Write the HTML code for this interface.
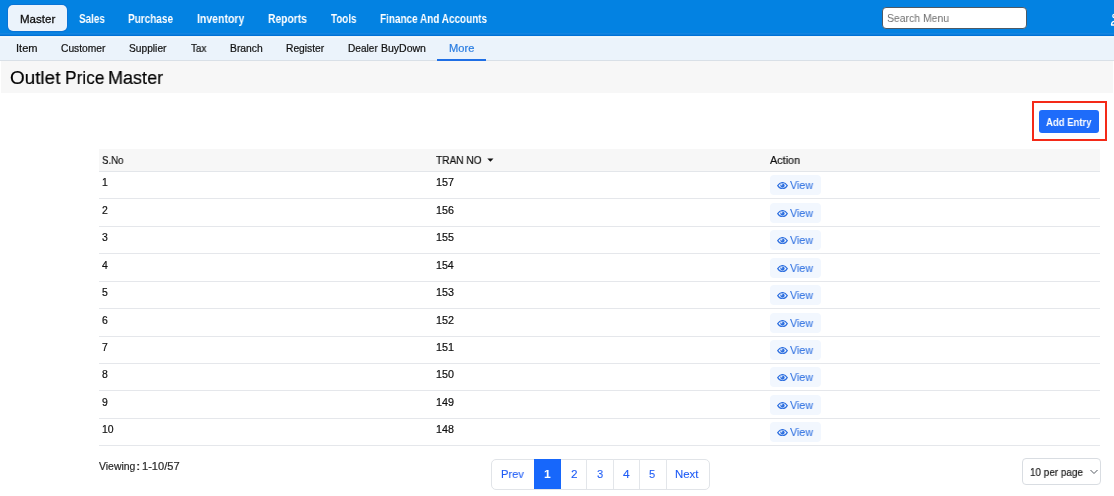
<!DOCTYPE html>
<html><head><meta charset="utf-8">
<style>
html,body{margin:0;padding:0;width:1114px;height:496px;overflow:hidden;background:#fff;position:relative;font-family:"Liberation Sans",sans-serif;}
.b{position:absolute;box-sizing:border-box;}
.t{position:absolute;white-space:nowrap;line-height:20px;height:20px;transform-origin:0 0;will-change:transform;font-family:"Liberation Sans",sans-serif;}
</style></head><body>
<!-- header -->
<div class="b" style="left:0;top:0;width:1114px;height:36px;background:#0382e2"></div>
<div class="b" style="left:0;top:33px;width:1114px;height:1px;background:#1484e0"></div><div class="b" style="left:0;top:34px;width:1114px;height:1px;background:#0a7fde"></div><div class="b" style="left:0;top:35px;width:1114px;height:1px;background:#0071d6"></div>
<div class="b" style="left:7px;top:4px;width:61px;height:28px;border-radius:6px;background:#0a74d6"></div>
<div class="b" style="left:8px;top:5px;width:59px;height:26px;border-radius:5px;background:#ebf3fb"></div>
<div class="b" style="left:882px;top:7px;width:145px;height:22px;border-radius:4px;background:#fff;border:1px solid #4d5a66"></div>
<svg class="b" style="left:1100px;top:5px" width="20" height="24" viewBox="0 0 20 24"><circle cx="14.4" cy="10.9" r="1.6" fill="none" stroke="#fff" stroke-width="1.3"/><path d="M11.5 20 C11.5 17.6 13.2 16.2 15.2 16.2 S19 17.6 19 20 Z" fill="none" stroke="#fff" stroke-width="1.3" stroke-linejoin="round"/></svg>
<!-- subnav -->
<div class="b" style="left:0;top:36px;width:1114px;height:25px;background:#ebf3fb"></div>
<div class="b" style="left:0;top:36px;width:1114px;height:1px;background:#edf5fb"></div><div class="b" style="left:0;top:37px;width:1114px;height:1px;background:#f1f8fc"></div>
<div class="b" style="left:0;top:60px;width:1114px;height:1px;background:#d9e0e7"></div>
<div class="b" style="left:437px;top:59px;width:49px;height:2px;background:#1f6fe5"></div>
<!-- title bar -->
<div class="b" style="left:1px;top:61px;width:1112px;height:32px;background:#f7f7f7"></div>
<!-- add entry -->
<div class="b" style="left:1032px;top:101px;width:75px;height:40px;border:2px solid #f42a18"></div>
<div class="b" style="left:1039px;top:110px;width:60px;height:23px;border-radius:3px;background:#1e6cfa"></div>
<!-- table -->
<div class="b" style="left:99px;top:149px;width:1001px;height:22px;background:#f7f7f7"></div>
<div class="b" style="left:99px;top:171px;width:1001px;height:1px;background:#e3e6ea"></div>
<div class="b" style="left:99px;top:198px;width:1001px;height:1px;background:#e5e7eb"></div>
<div class="b" style="left:770px;top:175px;width:50.5px;height:20px;border-radius:4px;background:#f2f7fe"></div>
<svg class="b" style="left:777px;top:182px" width="11" height="7.3" viewBox="0 0 11 7.3"><path d="M0.7 3.65 C2.3 1.2 3.9 0.55 5.5 0.55 S8.7 1.2 10.3 3.65 C8.7 6.1 7.1 6.75 5.5 6.75 S2.3 6.1 0.7 3.65 Z" fill="none" stroke="#2d6fe0" stroke-width="1.15"/><circle cx="5.5" cy="3.6" r="2.15" fill="#2d6fe0"/><circle cx="4.7" cy="2.8" r="0.75" fill="#f2f7fe"/></svg>
<div class="b" style="left:99px;top:226px;width:1001px;height:1px;background:#e5e7eb"></div>
<div class="b" style="left:770px;top:203px;width:50.5px;height:20px;border-radius:4px;background:#f2f7fe"></div>
<svg class="b" style="left:777px;top:210px" width="11" height="7.3" viewBox="0 0 11 7.3"><path d="M0.7 3.65 C2.3 1.2 3.9 0.55 5.5 0.55 S8.7 1.2 10.3 3.65 C8.7 6.1 7.1 6.75 5.5 6.75 S2.3 6.1 0.7 3.65 Z" fill="none" stroke="#2d6fe0" stroke-width="1.15"/><circle cx="5.5" cy="3.6" r="2.15" fill="#2d6fe0"/><circle cx="4.7" cy="2.8" r="0.75" fill="#f2f7fe"/></svg>
<div class="b" style="left:99px;top:253px;width:1001px;height:1px;background:#e5e7eb"></div>
<div class="b" style="left:770px;top:230px;width:50.5px;height:20px;border-radius:4px;background:#f2f7fe"></div>
<svg class="b" style="left:777px;top:237px" width="11" height="7.3" viewBox="0 0 11 7.3"><path d="M0.7 3.65 C2.3 1.2 3.9 0.55 5.5 0.55 S8.7 1.2 10.3 3.65 C8.7 6.1 7.1 6.75 5.5 6.75 S2.3 6.1 0.7 3.65 Z" fill="none" stroke="#2d6fe0" stroke-width="1.15"/><circle cx="5.5" cy="3.6" r="2.15" fill="#2d6fe0"/><circle cx="4.7" cy="2.8" r="0.75" fill="#f2f7fe"/></svg>
<div class="b" style="left:99px;top:281px;width:1001px;height:1px;background:#e5e7eb"></div>
<div class="b" style="left:770px;top:258px;width:50.5px;height:20px;border-radius:4px;background:#f2f7fe"></div>
<svg class="b" style="left:777px;top:265px" width="11" height="7.3" viewBox="0 0 11 7.3"><path d="M0.7 3.65 C2.3 1.2 3.9 0.55 5.5 0.55 S8.7 1.2 10.3 3.65 C8.7 6.1 7.1 6.75 5.5 6.75 S2.3 6.1 0.7 3.65 Z" fill="none" stroke="#2d6fe0" stroke-width="1.15"/><circle cx="5.5" cy="3.6" r="2.15" fill="#2d6fe0"/><circle cx="4.7" cy="2.8" r="0.75" fill="#f2f7fe"/></svg>
<div class="b" style="left:99px;top:308px;width:1001px;height:1px;background:#e5e7eb"></div>
<div class="b" style="left:770px;top:285px;width:50.5px;height:20px;border-radius:4px;background:#f2f7fe"></div>
<svg class="b" style="left:777px;top:292px" width="11" height="7.3" viewBox="0 0 11 7.3"><path d="M0.7 3.65 C2.3 1.2 3.9 0.55 5.5 0.55 S8.7 1.2 10.3 3.65 C8.7 6.1 7.1 6.75 5.5 6.75 S2.3 6.1 0.7 3.65 Z" fill="none" stroke="#2d6fe0" stroke-width="1.15"/><circle cx="5.5" cy="3.6" r="2.15" fill="#2d6fe0"/><circle cx="4.7" cy="2.8" r="0.75" fill="#f2f7fe"/></svg>
<div class="b" style="left:99px;top:336px;width:1001px;height:1px;background:#e5e7eb"></div>
<div class="b" style="left:770px;top:313px;width:50.5px;height:20px;border-radius:4px;background:#f2f7fe"></div>
<svg class="b" style="left:777px;top:320px" width="11" height="7.3" viewBox="0 0 11 7.3"><path d="M0.7 3.65 C2.3 1.2 3.9 0.55 5.5 0.55 S8.7 1.2 10.3 3.65 C8.7 6.1 7.1 6.75 5.5 6.75 S2.3 6.1 0.7 3.65 Z" fill="none" stroke="#2d6fe0" stroke-width="1.15"/><circle cx="5.5" cy="3.6" r="2.15" fill="#2d6fe0"/><circle cx="4.7" cy="2.8" r="0.75" fill="#f2f7fe"/></svg>
<div class="b" style="left:99px;top:363px;width:1001px;height:1px;background:#e5e7eb"></div>
<div class="b" style="left:770px;top:340px;width:50.5px;height:20px;border-radius:4px;background:#f2f7fe"></div>
<svg class="b" style="left:777px;top:347px" width="11" height="7.3" viewBox="0 0 11 7.3"><path d="M0.7 3.65 C2.3 1.2 3.9 0.55 5.5 0.55 S8.7 1.2 10.3 3.65 C8.7 6.1 7.1 6.75 5.5 6.75 S2.3 6.1 0.7 3.65 Z" fill="none" stroke="#2d6fe0" stroke-width="1.15"/><circle cx="5.5" cy="3.6" r="2.15" fill="#2d6fe0"/><circle cx="4.7" cy="2.8" r="0.75" fill="#f2f7fe"/></svg>
<div class="b" style="left:99px;top:390px;width:1001px;height:1px;background:#e5e7eb"></div>
<div class="b" style="left:770px;top:367px;width:50.5px;height:20px;border-radius:4px;background:#f2f7fe"></div>
<svg class="b" style="left:777px;top:374px" width="11" height="7.3" viewBox="0 0 11 7.3"><path d="M0.7 3.65 C2.3 1.2 3.9 0.55 5.5 0.55 S8.7 1.2 10.3 3.65 C8.7 6.1 7.1 6.75 5.5 6.75 S2.3 6.1 0.7 3.65 Z" fill="none" stroke="#2d6fe0" stroke-width="1.15"/><circle cx="5.5" cy="3.6" r="2.15" fill="#2d6fe0"/><circle cx="4.7" cy="2.8" r="0.75" fill="#f2f7fe"/></svg>
<div class="b" style="left:99px;top:418px;width:1001px;height:1px;background:#e5e7eb"></div>
<div class="b" style="left:770px;top:395px;width:50.5px;height:20px;border-radius:4px;background:#f2f7fe"></div>
<svg class="b" style="left:777px;top:402px" width="11" height="7.3" viewBox="0 0 11 7.3"><path d="M0.7 3.65 C2.3 1.2 3.9 0.55 5.5 0.55 S8.7 1.2 10.3 3.65 C8.7 6.1 7.1 6.75 5.5 6.75 S2.3 6.1 0.7 3.65 Z" fill="none" stroke="#2d6fe0" stroke-width="1.15"/><circle cx="5.5" cy="3.6" r="2.15" fill="#2d6fe0"/><circle cx="4.7" cy="2.8" r="0.75" fill="#f2f7fe"/></svg>
<div class="b" style="left:99px;top:445px;width:1001px;height:1px;background:#e5e7eb"></div>
<div class="b" style="left:770px;top:422px;width:50.5px;height:20px;border-radius:4px;background:#f2f7fe"></div>
<svg class="b" style="left:777px;top:429px" width="11" height="7.3" viewBox="0 0 11 7.3"><path d="M0.7 3.65 C2.3 1.2 3.9 0.55 5.5 0.55 S8.7 1.2 10.3 3.65 C8.7 6.1 7.1 6.75 5.5 6.75 S2.3 6.1 0.7 3.65 Z" fill="none" stroke="#2d6fe0" stroke-width="1.15"/><circle cx="5.5" cy="3.6" r="2.15" fill="#2d6fe0"/><circle cx="4.7" cy="2.8" r="0.75" fill="#f2f7fe"/></svg>
<!-- pagination -->
<div class="b" style="left:491px;top:459px;width:219px;height:31px;border:1px solid #e1e4e8;border-radius:5px;background:#fff"></div>
<div class="b" style="left:534px;top:459px;width:27px;height:30px;background:#1767fb"></div>
<div class="b" style="left:586px;top:459px;width:1px;height:30px;background:#e3e6ea"></div>
<div class="b" style="left:613px;top:459px;width:1px;height:30px;background:#e3e6ea"></div>
<div class="b" style="left:639px;top:459px;width:1px;height:30px;background:#e3e6ea"></div>
<div class="b" style="left:666px;top:459px;width:1px;height:30px;background:#e3e6ea"></div>
<!-- per page -->
<div class="b" style="left:1022px;top:458px;width:79px;height:27px;border:1px solid #d9dde2;border-radius:4px;background:#fff"></div>
<svg class="b" style="left:1089px;top:468px" width="10" height="8" viewBox="0 0 10 8"><path d="M1.5 2 L5 5.5 L8.5 2" fill="none" stroke="#555b63" stroke-width="1"/></svg>
<svg class="b" style="left:487px;top:158px" width="7" height="5" viewBox="0 0 7 5"><path d="M0.3 0.4 L6.5 0.4 L3.4 3.7 Z" fill="#111"/></svg>
<span class="t" style="left:19.58px;top:8.93px;font-size:11.45px;font-weight:normal;color:#111111;transform:scaleX(1.0081);-webkit-text-stroke:0.3px #111111">Master</span>
<span class="t" style="left:78.50px;top:8.73px;font-size:12.03px;font-weight:bold;color:#ffffff;transform:scaleX(0.8225)">Sales</span>
<span class="t" style="left:127.60px;top:8.73px;font-size:12.03px;font-weight:bold;color:#ffffff;transform:scaleX(0.8320)">Purchase</span>
<span class="t" style="left:196.67px;top:8.73px;font-size:12.03px;font-weight:bold;color:#ffffff;transform:scaleX(0.8734)">Inventory</span>
<span class="t" style="left:268.38px;top:8.73px;font-size:12.03px;font-weight:bold;color:#ffffff;transform:scaleX(0.8557)">Reports</span>
<span class="t" style="left:330.90px;top:8.73px;font-size:12.03px;font-weight:bold;color:#ffffff;transform:scaleX(0.8163)">Tools</span>
<span class="t" style="left:380.40px;top:8.73px;font-size:12.03px;font-weight:bold;color:#ffffff;transform:scaleX(0.8284)">Finance And Accounts</span>
<span class="t" style="left:886.58px;top:7.98px;font-size:11.01px;font-weight:normal;color:#707070;transform:scaleX(0.9481)">Search Menu</span>
<span class="t" style="left:15.70px;top:39.48px;font-size:10.14px;font-weight:normal;color:#111111;transform:scaleX(1.0947);-webkit-text-stroke:0.2px #111111">Item</span>
<span class="t" style="left:60.99px;top:39.48px;font-size:10.14px;font-weight:normal;color:#111111;transform:scaleX(1.0108);-webkit-text-stroke:0.2px #111111">Customer</span>
<span class="t" style="left:129.29px;top:39.48px;font-size:10.14px;font-weight:normal;color:#111111;transform:scaleX(1.0086);-webkit-text-stroke:0.2px #111111">Supplier</span>
<span class="t" style="left:191.30px;top:39.48px;font-size:10.14px;font-weight:normal;color:#111111;transform:scaleX(0.9688);-webkit-text-stroke:0.2px #111111">Tax</span>
<span class="t" style="left:230.07px;top:39.48px;font-size:10.14px;font-weight:normal;color:#111111;transform:scaleX(1.0207);-webkit-text-stroke:0.2px #111111">Branch</span>
<span class="t" style="left:285.98px;top:39.48px;font-size:10.14px;font-weight:normal;color:#111111;transform:scaleX(1.0127);-webkit-text-stroke:0.2px #111111">Register</span>
<span class="t" style="left:347.99px;top:39.48px;font-size:10.14px;font-weight:normal;color:#111111;transform:scaleX(0.9951);-webkit-text-stroke:0.2px #111111">Dealer</span>
<span class="t" style="left:380.66px;top:39.48px;font-size:10.14px;font-weight:normal;color:#111111;transform:scaleX(1.0372);-webkit-text-stroke:0.2px #111111">BuyDown</span>
<span class="t" style="left:449.11px;top:39.48px;font-size:10.14px;font-weight:normal;color:#2a7de1;transform:scaleX(1.0987);-webkit-text-stroke:0.2px #2a7de1">More</span>
<span class="t" style="left:10.25px;top:67.72px;font-size:18.99px;font-weight:normal;color:#000000;transform:scaleX(0.9933);-webkit-text-stroke:0.2px #000000">Outlet</span>
<span class="t" style="left:64.62px;top:67.72px;font-size:18.99px;font-weight:normal;color:#000000;transform:scaleX(0.9111);-webkit-text-stroke:0.2px #000000">Price</span>
<span class="t" style="left:107.56px;top:67.72px;font-size:18.99px;font-weight:normal;color:#000000;transform:scaleX(0.9492);-webkit-text-stroke:0.2px #000000">Master</span>
<span class="t" style="left:1045.81px;top:111.93px;font-size:11.45px;font-weight:bold;color:#ffffff;transform:scaleX(0.8328)">Add Entry</span>
<span class="t" style="left:101.61px;top:149.88px;font-size:11.30px;font-weight:normal;color:#111111;transform:scaleX(0.8570);-webkit-text-stroke:0.2px #111111">S.No</span>
<span class="t" style="left:435.90px;top:149.98px;font-size:11.01px;font-weight:normal;color:#111111;transform:scaleX(0.9197);-webkit-text-stroke:0.2px #111111">TRAN NO</span>
<span class="t" style="left:770.00px;top:149.98px;font-size:11.01px;font-weight:normal;color:#111111;transform:scaleX(0.9835);-webkit-text-stroke:0.2px #111111">Action</span>
<span class="t" style="left:101.87px;top:173.38px;font-size:10.43px;font-weight:normal;color:#111111;transform:scaleX(1.0000);-webkit-text-stroke:0.2px #111111">1</span>
<span class="t" style="left:435.89px;top:173.38px;font-size:10.43px;font-weight:normal;color:#111111;transform:scaleX(1.0341);-webkit-text-stroke:0.2px #111111">157</span>
<span class="t" style="left:789.80px;top:174.98px;font-size:11.59px;font-weight:normal;color:#2d6fe0;transform:scaleX(0.9276);-webkit-text-stroke:0.05px #2d6fe0">View</span>
<span class="t" style="left:102.08px;top:201.38px;font-size:10.43px;font-weight:normal;color:#111111;transform:scaleX(1.0000);-webkit-text-stroke:0.2px #111111">2</span>
<span class="t" style="left:435.90px;top:201.38px;font-size:10.43px;font-weight:normal;color:#111111;transform:scaleX(1.0275);-webkit-text-stroke:0.2px #111111">156</span>
<span class="t" style="left:789.80px;top:202.98px;font-size:11.59px;font-weight:normal;color:#2d6fe0;transform:scaleX(0.9276);-webkit-text-stroke:0.05px #2d6fe0">View</span>
<span class="t" style="left:102.29px;top:228.38px;font-size:10.43px;font-weight:normal;color:#111111;transform:scaleX(1.0000);-webkit-text-stroke:0.2px #111111">3</span>
<span class="t" style="left:435.90px;top:228.38px;font-size:10.43px;font-weight:normal;color:#111111;transform:scaleX(1.0275);-webkit-text-stroke:0.2px #111111">155</span>
<span class="t" style="left:789.80px;top:229.98px;font-size:11.59px;font-weight:normal;color:#2d6fe0;transform:scaleX(0.9276);-webkit-text-stroke:0.05px #2d6fe0">View</span>
<span class="t" style="left:102.39px;top:256.38px;font-size:10.43px;font-weight:normal;color:#111111;transform:scaleX(1.0000);-webkit-text-stroke:0.2px #111111">4</span>
<span class="t" style="left:435.90px;top:256.38px;font-size:10.43px;font-weight:normal;color:#111111;transform:scaleX(1.0209);-webkit-text-stroke:0.2px #111111">154</span>
<span class="t" style="left:789.80px;top:257.98px;font-size:11.59px;font-weight:normal;color:#2d6fe0;transform:scaleX(0.9276);-webkit-text-stroke:0.05px #2d6fe0">View</span>
<span class="t" style="left:102.18px;top:283.38px;font-size:10.43px;font-weight:normal;color:#111111;transform:scaleX(1.0000);-webkit-text-stroke:0.2px #111111">5</span>
<span class="t" style="left:435.90px;top:283.38px;font-size:10.43px;font-weight:normal;color:#111111;transform:scaleX(1.0275);-webkit-text-stroke:0.2px #111111">153</span>
<span class="t" style="left:789.80px;top:284.98px;font-size:11.59px;font-weight:normal;color:#2d6fe0;transform:scaleX(0.9276);-webkit-text-stroke:0.05px #2d6fe0">View</span>
<span class="t" style="left:102.08px;top:311.38px;font-size:10.43px;font-weight:normal;color:#111111;transform:scaleX(1.0000);-webkit-text-stroke:0.2px #111111">6</span>
<span class="t" style="left:435.89px;top:311.38px;font-size:10.43px;font-weight:normal;color:#111111;transform:scaleX(1.0341);-webkit-text-stroke:0.2px #111111">152</span>
<span class="t" style="left:789.80px;top:312.98px;font-size:11.59px;font-weight:normal;color:#2d6fe0;transform:scaleX(0.9276);-webkit-text-stroke:0.05px #2d6fe0">View</span>
<span class="t" style="left:102.08px;top:338.38px;font-size:10.43px;font-weight:normal;color:#111111;transform:scaleX(1.0000);-webkit-text-stroke:0.2px #111111">7</span>
<span class="t" style="left:435.89px;top:338.38px;font-size:10.43px;font-weight:normal;color:#111111;transform:scaleX(1.0341);-webkit-text-stroke:0.2px #111111">151</span>
<span class="t" style="left:789.80px;top:339.98px;font-size:11.59px;font-weight:normal;color:#2d6fe0;transform:scaleX(0.9276);-webkit-text-stroke:0.05px #2d6fe0">View</span>
<span class="t" style="left:102.18px;top:365.38px;font-size:10.43px;font-weight:normal;color:#111111;transform:scaleX(1.0000);-webkit-text-stroke:0.2px #111111">8</span>
<span class="t" style="left:435.90px;top:365.38px;font-size:10.43px;font-weight:normal;color:#111111;transform:scaleX(1.0275);-webkit-text-stroke:0.2px #111111">150</span>
<span class="t" style="left:789.80px;top:366.98px;font-size:11.59px;font-weight:normal;color:#2d6fe0;transform:scaleX(0.9276);-webkit-text-stroke:0.05px #2d6fe0">View</span>
<span class="t" style="left:102.18px;top:393.38px;font-size:10.43px;font-weight:normal;color:#111111;transform:scaleX(1.0000);-webkit-text-stroke:0.2px #111111">9</span>
<span class="t" style="left:435.89px;top:393.38px;font-size:10.43px;font-weight:normal;color:#111111;transform:scaleX(1.0341);-webkit-text-stroke:0.2px #111111">149</span>
<span class="t" style="left:789.80px;top:394.98px;font-size:11.59px;font-weight:normal;color:#2d6fe0;transform:scaleX(0.9276);-webkit-text-stroke:0.05px #2d6fe0">View</span>
<span class="t" style="left:101.87px;top:420.38px;font-size:10.43px;font-weight:normal;color:#111111;transform:scaleX(1.0000);-webkit-text-stroke:0.2px #111111">10</span>
<span class="t" style="left:435.90px;top:420.38px;font-size:10.43px;font-weight:normal;color:#111111;transform:scaleX(1.0275);-webkit-text-stroke:0.2px #111111">148</span>
<span class="t" style="left:789.80px;top:421.98px;font-size:11.59px;font-weight:normal;color:#2d6fe0;transform:scaleX(0.9276);-webkit-text-stroke:0.05px #2d6fe0">View</span>
<span class="t" style="left:99.00px;top:457.38px;font-size:10.43px;font-weight:normal;color:#2a2a2a;transform:scaleX(1.0009);-webkit-text-stroke:0.2px #2a2a2a">Viewing</span>
<span class="t" style="left:136.16px;top:457.38px;font-size:10.43px;font-weight:normal;color:#2a2a2a;transform:scaleX(1.5333);-webkit-text-stroke:0.2px #2a2a2a">:</span>
<span class="t" style="left:142.12px;top:457.38px;font-size:10.43px;font-weight:normal;color:#2a2a2a;transform:scaleX(1.0621);-webkit-text-stroke:0.2px #2a2a2a">1-10/57</span>
<span class="t" style="left:501.31px;top:464.48px;font-size:11.30px;font-weight:normal;color:#1f5cf5;transform:scaleX(0.9848);-webkit-text-stroke:0.1px #1f5cf5">Prev</span>
<span class="t" style="left:543.97px;top:464.48px;font-size:11.30px;font-weight:bold;color:#ffffff;transform:scaleX(1.0728)">1</span>
<span class="t" style="left:570.51px;top:464.48px;font-size:11.30px;font-weight:normal;color:#1f5cf5;transform:scaleX(1.0385);-webkit-text-stroke:0.1px #1f5cf5">2</span>
<span class="t" style="left:597.07px;top:464.48px;font-size:11.30px;font-weight:normal;color:#1f5cf5;transform:scaleX(0.9749);-webkit-text-stroke:0.1px #1f5cf5">3</span>
<span class="t" style="left:622.86px;top:464.48px;font-size:11.30px;font-weight:normal;color:#1f5cf5;transform:scaleX(1.0581);-webkit-text-stroke:0.1px #1f5cf5">4</span>
<span class="t" style="left:649.46px;top:464.48px;font-size:11.30px;font-weight:normal;color:#1f5cf5;transform:scaleX(0.9768);-webkit-text-stroke:0.1px #1f5cf5">5</span>
<span class="t" style="left:675.39px;top:464.48px;font-size:11.30px;font-weight:normal;color:#1f5cf5;transform:scaleX(1.0106);-webkit-text-stroke:0.1px #1f5cf5">Next</span>
<span class="t" style="left:1029.60px;top:462.38px;font-size:11.01px;font-weight:normal;color:#222222;transform:scaleX(0.9024);-webkit-text-stroke:0.2px #222222">10 per page</span>
</body></html>
